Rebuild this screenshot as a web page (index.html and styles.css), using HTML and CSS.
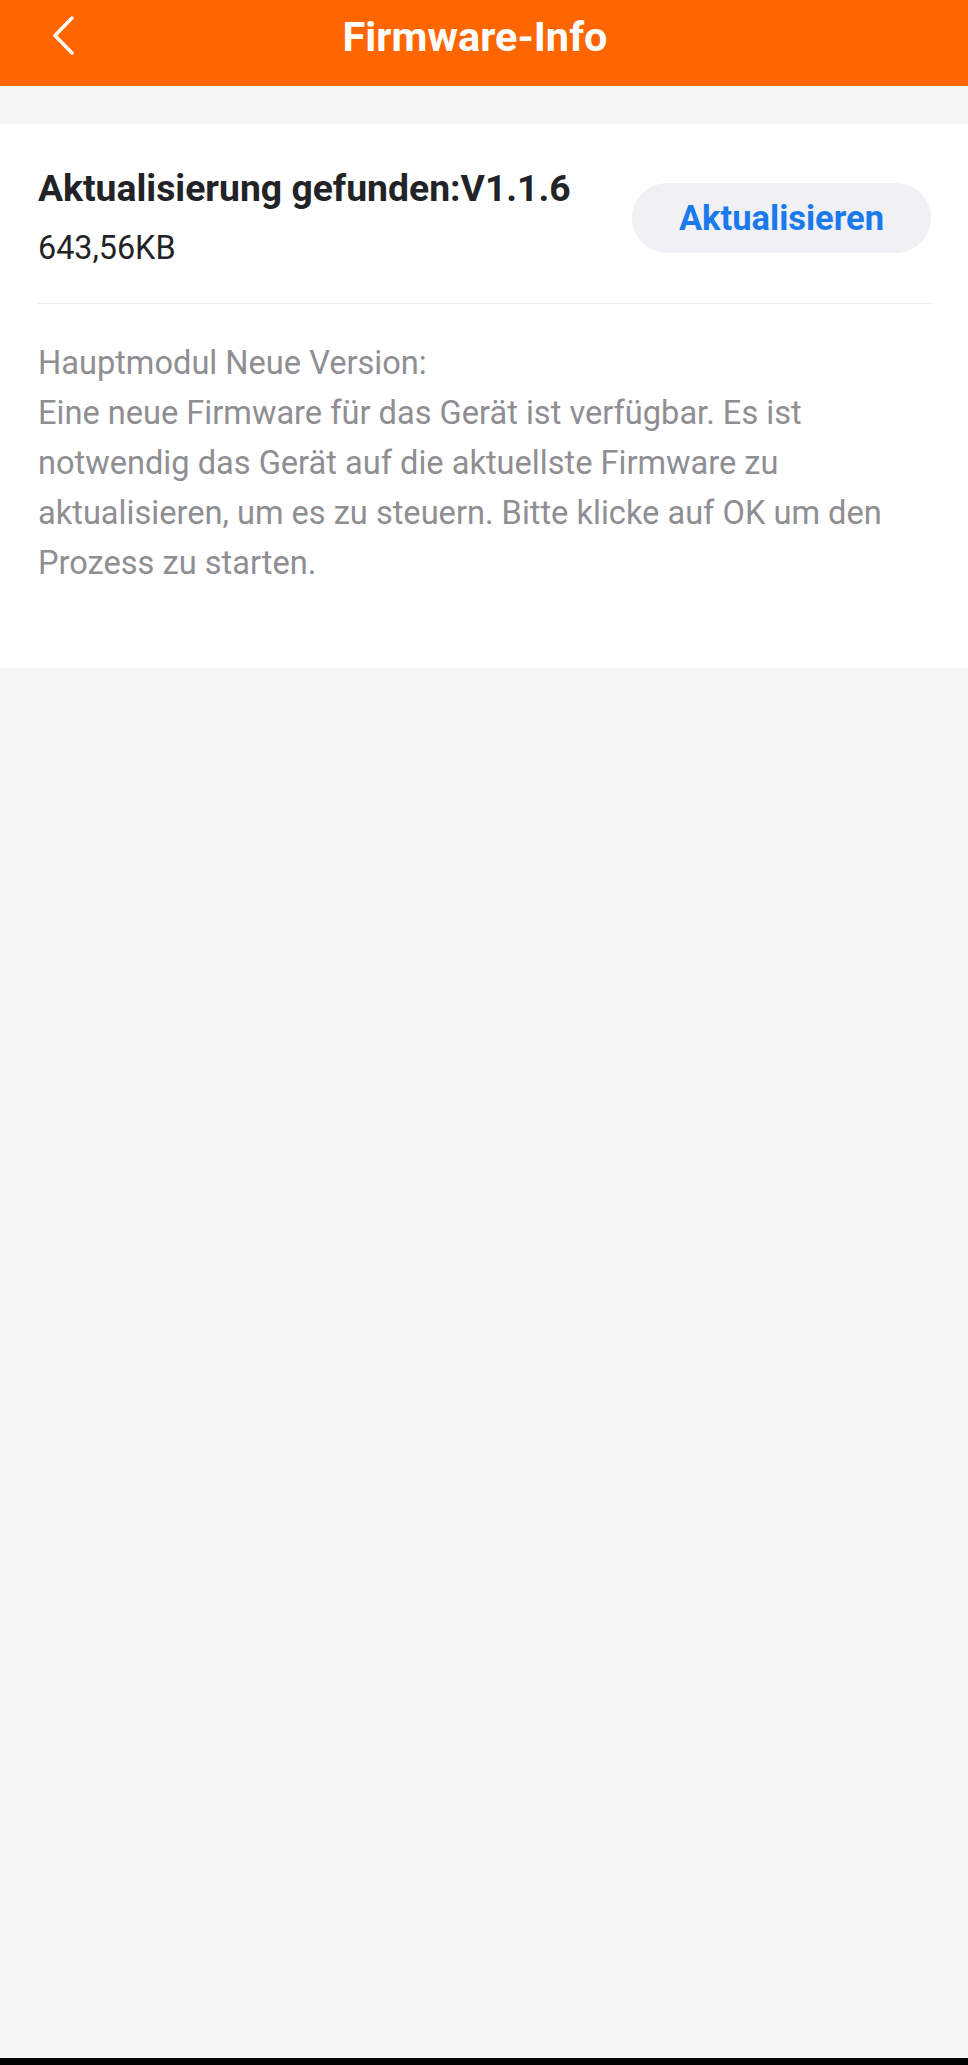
FILE: index.html
```html
<!DOCTYPE html>
<html lang="de">
<head>
<meta charset="utf-8">
<title>Firmware-Info</title>
<link rel="stylesheet" href="styles.css">
</head>
<body>
<div class="page">
  <header class="topbar">
    <div class="topbar-row">
      <button class="back" aria-label="Zurück">
        <svg width="30" height="42" viewBox="0 0 30 42"><polyline points="22,2 5,19.5 22,37" fill="none" stroke="#ffffff" stroke-width="3.4" stroke-linecap="round" stroke-linejoin="round"/></svg>
      </button>
      <h1 class="title">Firmware-Info</h1>
      <span class="spacer"></span>
    </div>
  </header>
  <main class="content">
    <section class="card">
      <div class="update-row">
        <div class="update-info">
          <div class="update-title">Aktualisierung gefunden:V1.1.6</div>
          <div class="update-size">643,56KB</div>
        </div>
        <button class="update-btn">Aktualisieren</button>
      </div>
      <div class="notes">
        <p>Hauptmodul Neue Version:<br>Eine neue Firmware für das Gerät ist verfügbar. Es ist notwendig das Gerät auf die aktuellste Firmware zu aktualisieren, um es zu steuern. Bitte klicke auf OK um den Prozess zu starten.</p>
      </div>
    </section>
    <div class="filler"></div>
  </main>
  <div class="navbar"></div>
</div>
</body>
</html>
```

FILE: styles.css
```css
* { box-sizing: border-box; }
html, body { margin: 0; padding: 0; }
body {
  font-family: Roboto, "Liberation Sans", Arial, sans-serif;
  background: #f7f7f7;
}
.page {
  display: flex;
  flex-direction: column;
  min-height: 100vh;
}
.topbar {
  background: #ff6600;
  height: 86px;
}
.topbar-row {
  height: 74px;
  display: grid;
  grid-template-columns: 1fr auto 1fr;
  align-items: center;
}
.back {
  justify-self: start;
  margin-left: 50px;
  padding: 0;
  border: 0;
  background: none;
  display: flex;
  width: 30px;
  height: 42px;
}
.title {
  margin: 0;
  color: #ffffff;
  font-size: 41.5px;
  line-height: 48px;
  font-weight: 700;
  margin-right: 18px;
}
.content {
  flex: 1;
  display: flex;
  flex-direction: column;
  padding-top: 38px;
}
.card {
  background: #ffffff;
  padding: 0 37px 0 38px;
}
.update-row {
  display: flex;
  align-items: center;
  justify-content: space-between;
  padding: 41px 0 35px;
  border-bottom: 1px solid #ebebeb;
}
.update-title {
  font-size: 37.3px;
  line-height: 46px;
  font-weight: 700;
  color: #222327;
}
.update-size {
  margin-top: 17px;
  font-size: 32.3px;
  line-height: 40px;
  color: #222327;
}
.update-btn {
  width: 299px;
  height: 70px;
  border: 0;
  border-radius: 35px;
  background: #f0f0f5;
  color: #1a7aec;
  font-family: Roboto, "Liberation Sans", Arial, sans-serif;
  font-size: 34.5px;
  font-weight: 700;
  margin-top: 2px;
}
.notes {
  padding: 34px 0 80px;
}
.notes p {
  margin: 0;
  font-size: 32.6px;
  line-height: 50px;
  color: #8e8e93;
}
.filler { flex: 1; }
.navbar {
  height: 7px;
  background: #000000;
}
```
